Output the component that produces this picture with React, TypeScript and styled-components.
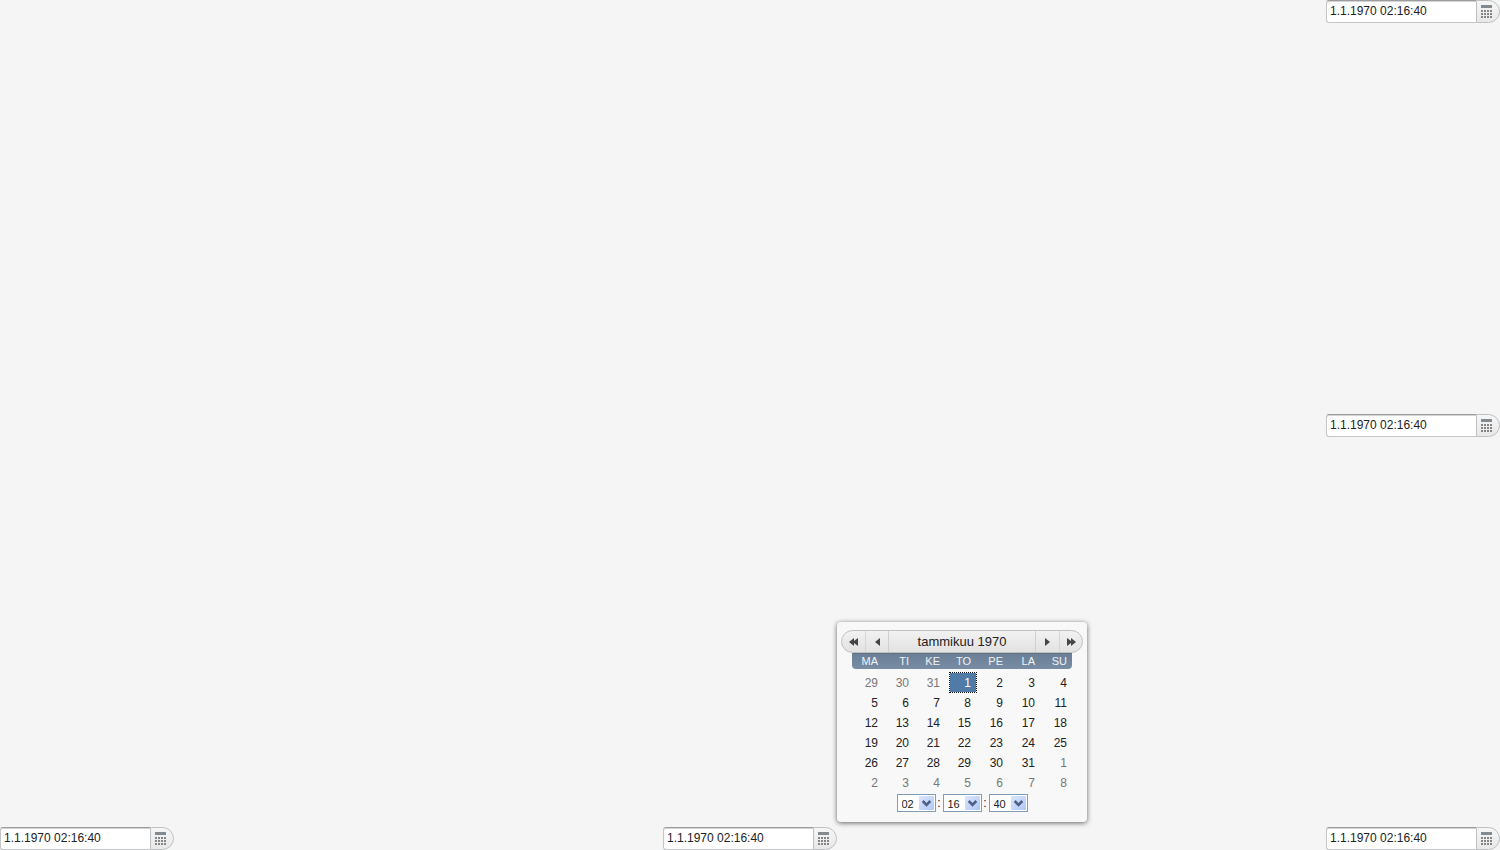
import React from "react";
import styled, { createGlobalStyle } from "styled-components";

const Global = createGlobalStyle`
  *, *::before, *::after { box-sizing: border-box; }
  body {
    margin: 0;
    background: #f5f5f5;
    color: #222;
    font-family: Arial, "Liberation Sans", sans-serif;
    font-size: 12px;
  }
  button, input, select { font: inherit; color: inherit; margin: 0; }
`;

const Page = styled.main`
  display: flex;
  flex-direction: column;
  justify-content: space-between;
  min-height: 100vh;
`;

const Row = styled.div<{ $align: string }>`
  display: flex;
  justify-content: ${(p) => p.$align};
`;

const BottomRow = styled.div`
  display: grid;
  grid-template-columns: 1fr auto 1fr;
  & > :last-child { justify-self: end; }
`;

const Field = styled.div`
  position: relative;
  display: flex;
  width: 174px;
  height: 23px;
`;

const DateInput = styled.input`
  flex: 1;
  min-width: 0;
  padding: 0 3px 1px;
  border: 1px solid #c3c5c7;
  border-top-color: #9c9c9c;
  border-right: 0;
  border-radius: 3px 0 0 3px;
  background: #fff;
  box-shadow: inset 0 1px 0 #d4d4d4;
  outline: none;
`;

const CalendarButton = styled.button`
  display: flex;
  align-items: center;
  width: 24px;
  padding: 0 0 0 4px;
  border: 1px solid #bfc0c1;
  border-radius: 0 12px 12px 0;
  background: linear-gradient(#f6f6f6, #e8e8e8);
`;

const Popup = styled.section`
  position: absolute;
  left: 100%;
  bottom: 28px;
  width: 250px;
  padding: 8px 4px 10px;
  border-radius: 4px;
  background: #f8f8f8;
  box-shadow: 0 1px 5px rgba(0, 0, 0, 0.6);
`;

const Header = styled.header`
  display: flex;
  height: 23px;
  border: 1px solid #bfc0c1;
  border-radius: 12px;
  background: linear-gradient(#f2f2f2, #e2e2e2);
  overflow: hidden;
`;

const Title = styled.h2`
  flex: 1;
  margin: 0;
  border-left: 1px solid #cfcfcf;
  border-right: 1px solid #cfcfcf;
  font-size: 13px;
  font-weight: 400;
  line-height: 21px;
  text-align: center;
`;

const NavButton = styled.button`
  display: flex;
  align-items: center;
  justify-content: center;
  width: 23px;
  padding: 0;
  border: 0;
  background: none;
  & + & { border-left: 1px solid #d6d6d6; }
`;

const Days = styled.table`
  width: 220px;
  margin: 0 auto;
  border-spacing: 0;
  table-layout: fixed;
`;

const Column = styled.col<{ $width: number }>`
  width: ${(p) => p.$width}px;
`;

const Weekday = styled.th`
  height: 16px;
  padding: 0 5px 0 0;
  border-top: 1px solid #5f7285;
  background: linear-gradient(#6b8096, #788da4);
  color: #f0f3f6;
  font-size: 11px;
  font-weight: 400;
  line-height: 15px;
  text-align: right;
  &:first-child { border-bottom-left-radius: 4px; }
  &:last-child { border-bottom-right-radius: 4px; }
`;

const DayBody = styled.tbody`
  &::before { content: ""; display: table-row; height: 4px; }
`;

const DayCell = styled.td`
  height: 20px;
  padding: 0;
  text-align: right;
  vertical-align: top;
`;

const DayButton = styled.button<{ $outside: boolean; $selected: boolean }>`
  display: block;
  width: 26px;
  height: 19px;
  margin-left: auto;
  padding: 1px 5px 0 0;
  border: 0;
  background: ${(p) => (p.$selected ? "#4f7ba6" : "none")};
  color: ${(p) => (p.$selected ? "#fff" : p.$outside ? "#777" : "#222")};
  outline: ${(p) => (p.$selected ? "1px dotted #111" : "none")};
  line-height: 18px;
  text-align: right;
`;

const Time = styled.div`
  display: flex;
  justify-content: center;
  height: 18px;
  margin-top: 1px;
  line-height: 18px;
`;

const Colon = styled.span`
  width: 7px;
  text-align: center;
`;

const SelectBox = styled.span`
  position: relative;
  display: flex;
  width: 39px;
  svg { position: absolute; right: 2px; top: 2px; pointer-events: none; }
`;

const TimeSelect = styled.select`
  appearance: none;
  width: 100%;
  padding: 0 0 3px 4px;
  border: 1px solid #7f9db9;
  border-radius: 0;
  background: #fff;
  font-size: 11px;
  outline: none;
`;

function CalendarIcon() {
  return (
    <svg width="11" height="13" viewBox="0 0 11 13" shapeRendering="crispEdges" aria-hidden="true">
      <path fill="#848b90" d="M0 0h11v3H0z" />
      {[5, 8, 11].map((y) =>
        [0, 3, 6, 9].map((x) => <rect key={`${x}-${y}`} x={x} y={y} width="2" height="2" fill="#858585" />)
      )}
    </svg>
  );
}

function Arrow({ double, right }: { double?: boolean; right?: boolean }) {
  return (
    <svg width="10" height="8" viewBox="0 0 10 8" fill="#454545" aria-hidden="true">
      <g transform={right ? "matrix(-1 0 0 1 10 0)" : undefined}>
        {double ? <path d="M0 4 5 0v3l4-3v8L5 5v3z" /> : <path d="M3 4 8 0v8z" />}
      </g>
    </svg>
  );
}

function DropArrow() {
  return (
    <svg width="15" height="14" viewBox="0 0 15 14" aria-hidden="true">
      <defs>
        <linearGradient id="drop" x1="0" y1="0" x2="1" y2="1">
          <stop stopColor="#dbe6fd" />
          <stop offset="1" stopColor="#afc7f8" />
        </linearGradient>
      </defs>
      <rect width="15" height="14" rx="1" fill="url(#drop)" />
      <path d="m3.700 5 3.800 3.800L11.300 5" fill="none" stroke="#4d6185" strokeWidth="2.600" />
    </svg>
  );
}

function DateField({ label, children }: { label: string; children?: React.ReactNode }) {
  return (
    <Field>
      <DateInput aria-label={label} defaultValue="1.1.1970 02:16:40" />
      <CalendarButton type="button" aria-label="Avaa kalenteri"><CalendarIcon /></CalendarButton>
      {children}
    </Field>
  );
}

const weekdays = ["MA", "TI", "KE", "TO", "PE", "LA", "SU"];
const columnWidths = [31, 31, 31, 31, 32, 32, 32];
const weeks = [
  [29, 30, 31, 1, 2, 3, 4],
  [5, 6, 7, 8, 9, 10, 11],
  [12, 13, 14, 15, 16, 17, 18],
  [19, 20, 21, 22, 23, 24, 25],
  [26, 27, 28, 29, 30, 31, 1],
  [2, 3, 4, 5, 6, 7, 8],
];
const times = [
  { label: "Tunnit", value: "02", count: 24 },
  { label: "Minuutit", value: "16", count: 60 },
  { label: "Sekunnit", value: "40", count: 60 },
];

function Calendar() {
  return (
    <Popup aria-label="Kalenteri">
      <Header>
        <NavButton type="button" aria-label="Edellinen vuosi"><Arrow double /></NavButton>
        <NavButton type="button" aria-label="Edellinen kuukausi"><Arrow /></NavButton>
        <Title>tammikuu 1970</Title>
        <NavButton type="button" aria-label="Seuraava kuukausi"><Arrow right /></NavButton>
        <NavButton type="button" aria-label="Seuraava vuosi"><Arrow double right /></NavButton>
      </Header>
      <Days>
        <colgroup>{columnWidths.map((w, i) => <Column key={i} $width={w} />)}</colgroup>
        <thead>
          <tr>{weekdays.map((d) => <Weekday key={d} scope="col">{d}</Weekday>)}</tr>
        </thead>
        <DayBody>
          {weeks.map((week, w) => (
            <tr key={w}>
              {week.map((day, i) => {
                const outside = (w === 0 && day > 7) || (w > 3 && day < 15);
                const selected = w === 0 && day === 1;
                return (
                  <DayCell key={i}>
                    <DayButton type="button" $outside={outside} $selected={selected} aria-pressed={selected}>{day}</DayButton>
                  </DayCell>
                );
              })}
            </tr>
          ))}
        </DayBody>
      </Days>
      <Time>
        {times.map((t, i) => (
          <React.Fragment key={t.label}>
            {i > 0 && <Colon>:</Colon>}
            <SelectBox>
              <TimeSelect aria-label={t.label} defaultValue={t.value}>
                {Array.from({ length: t.count }, (_, n) => String(n).padStart(2, "0")).map((n) => (
                  <option key={n}>{n}</option>
                ))}
              </TimeSelect>
              <DropArrow />
            </SelectBox>
          </React.Fragment>
        ))}
      </Time>
    </Popup>
  );
}

export default function App() {
  return (
    <>
      <Global />
      <Page>
        <Row $align="flex-end"><DateField label="Päivä ylhäällä oikealla" /></Row>
        <Row $align="flex-end"><DateField label="Päivä keskellä oikealla" /></Row>
        <BottomRow>
          <DateField label="Päivä alhaalla vasemmalla" />
          <DateField label="Päivä alhaalla keskellä"><Calendar /></DateField>
          <DateField label="Päivä alhaalla oikealla" />
        </BottomRow>
      </Page>
    </>
  );
}
